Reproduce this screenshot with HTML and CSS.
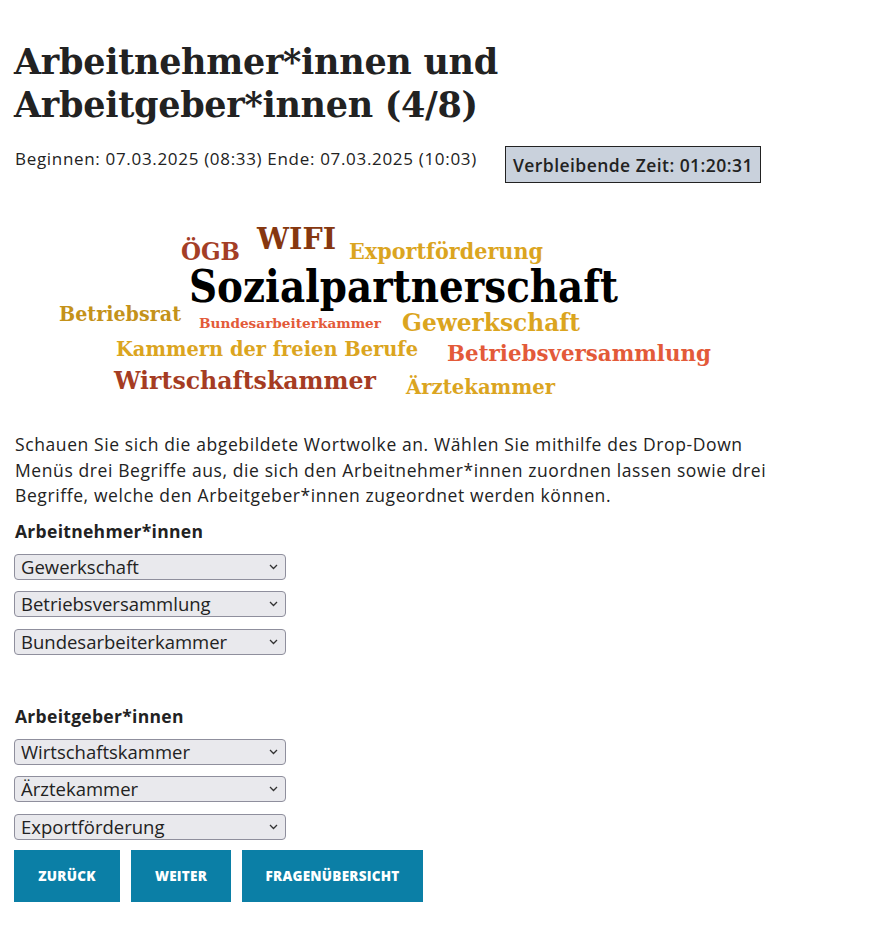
FILE: index.html
```html
<!DOCTYPE html>
<html lang="de">
<head>
<meta charset="utf-8">
<title>Arbeitnehmer*innen und Arbeitgeber*innen</title>
<link rel="stylesheet" href="styles.css">
</head>
<body>
<main class="page">
  <h1 class="title">Arbeitnehmer*innen und<br>Arbeitgeber*innen (4/8)</h1>
  <div class="meta">
    <span class="dates">Beginnen: 07.03.2025 (08:33) Ende: 07.03.2025 (10:03)</span>
    <span class="timer">Verbleibende Zeit: 01:20:31</span>
  </div>
  <svg class="cloud" width="881" height="200" viewBox="0 210 881 200" xmlns="http://www.w3.org/2000/svg">
    <text x="181" y="261" textLength="59" lengthAdjust="spacingAndGlyphs" class="w" fill="#a43e26" font-size="25">ÖGB</text>
    <text x="257" y="250" textLength="79" lengthAdjust="spacingAndGlyphs" class="w" fill="#86370f" font-size="29">WIFI</text>
    <text x="349" y="260" textLength="194" lengthAdjust="spacingAndGlyphs" class="w" fill="#dba51f" font-size="22">Exportförderung</text>
    <text x="189" y="303" textLength="429" lengthAdjust="spacingAndGlyphs" class="w" fill="#000" font-size="44">Sozialpartnerschaft</text>
    <text x="59" y="322" textLength="122" lengthAdjust="spacingAndGlyphs" class="w" fill="#c4921a" font-size="20">Betriebsrat</text>
    <text x="199" y="329" textLength="182" lengthAdjust="spacingAndGlyphs" class="w" fill="#e35a39" font-size="13">Bundesarbeiterkammer</text>
    <text x="402" y="332" textLength="178" lengthAdjust="spacingAndGlyphs" class="w" fill="#dba51f" font-size="25">Gewerkschaft</text>
    <text x="116" y="357" textLength="302" lengthAdjust="spacingAndGlyphs" class="w" fill="#dba51f" font-size="21">Kammern der freien Berufe</text>
    <text x="447" y="362" textLength="264" lengthAdjust="spacingAndGlyphs" class="w" fill="#e35a39" font-size="23">Betriebsversammlung</text>
    <text x="114" y="390" textLength="262" lengthAdjust="spacingAndGlyphs" class="w" fill="#a53c23" font-size="25">Wirtschaftskammer</text>
    <text x="406" y="395" textLength="149" lengthAdjust="spacingAndGlyphs" class="w" fill="#dba51f" font-size="20">Ärztekammer</text>
  </svg>
  <p class="intro">Schauen Sie sich die abgebildete Wortwolke an. Wählen Sie mithilfe des Drop-Down Menüs drei Begriffe aus, die sich den Arbeitnehmer*innen zuordnen lassen sowie drei Begriffe, welche den Arbeitgeber*innen zugeordnet werden können.</p>

  <section class="group">
    <h2 class="group-title">Arbeitnehmer*innen</h2>
    <div class="selects">
      <div class="pick-wrap"><select class="pick"><option>Gewerkschaft</option></select><svg class="chev" width="9" height="6" viewBox="0 0 9 6"><polyline points="1,1 4.5,4.5 8,1" fill="none" stroke="#333" stroke-width="1.3"/></svg></div>
      <div class="pick-wrap"><select class="pick"><option>Betriebsversammlung</option></select><svg class="chev" width="9" height="6" viewBox="0 0 9 6"><polyline points="1,1 4.5,4.5 8,1" fill="none" stroke="#333" stroke-width="1.3"/></svg></div>
      <div class="pick-wrap"><select class="pick"><option>Bundesarbeiterkammer</option></select><svg class="chev" width="9" height="6" viewBox="0 0 9 6"><polyline points="1,1 4.5,4.5 8,1" fill="none" stroke="#333" stroke-width="1.3"/></svg></div>
    </div>
  </section>

  <section class="group group-second">
    <h2 class="group-title">Arbeitgeber*innen</h2>
    <div class="selects">
      <div class="pick-wrap"><select class="pick"><option>Wirtschaftskammer</option></select><svg class="chev" width="9" height="6" viewBox="0 0 9 6"><polyline points="1,1 4.5,4.5 8,1" fill="none" stroke="#333" stroke-width="1.3"/></svg></div>
      <div class="pick-wrap"><select class="pick"><option>Ärztekammer</option></select><svg class="chev" width="9" height="6" viewBox="0 0 9 6"><polyline points="1,1 4.5,4.5 8,1" fill="none" stroke="#333" stroke-width="1.3"/></svg></div>
      <div class="pick-wrap"><select class="pick"><option>Exportförderung</option></select><svg class="chev" width="9" height="6" viewBox="0 0 9 6"><polyline points="1,1 4.5,4.5 8,1" fill="none" stroke="#333" stroke-width="1.3"/></svg></div>
    </div>
  </section>

  <nav class="actions">
    <button class="btn btn-back">Zurück</button>
    <button class="btn btn-next">Weiter</button>
    <button class="btn btn-overview">Fragenübersicht</button>
  </nav>
</main>
</body>
</html>
```

FILE: styles.css
```css
html, body {
  margin: 0;
  padding: 0;
  background: #fff;
}

body {
  font-family: "Open Sans", "Lato", sans-serif;
  color: #222;
}

.page {
  padding: 40px 0 30px 14px;
  width: 800px;
}

.title {
  margin: 0;
  font-family: "DejaVu Serif", serif;
  font-weight: bold;
  font-size: 35px;
  line-height: 43px;
  letter-spacing: -0.3px;
  color: #222;
}

.meta {
  display: flex;
  align-items: flex-start;
  margin-top: 22px;
}

.dates {
  font-size: 17px;
  line-height: 20px;
  padding-top: 1px;
  margin-left: 1px;
  letter-spacing: 0.68px;
}

.timer {
  margin-left: 28px;
  margin-top: -2px;
  background: #c9d1dc;
  border: 1px solid #222;
  font-weight: 600;
  font-size: 17.5px;
  line-height: 21px;
  padding: 8px 7px 6px 7px;
  letter-spacing: 0.45px;
}

.cloud {
  display: block;
  margin: 26px 0 0 -14px;
}

.w {
  font-family: "DejaVu Serif", serif;
  font-weight: bold;
}

.intro {
  margin: 23px 0 0 1px;
  width: 765px;
  font-size: 17.5px;
  line-height: 25.5px;
  letter-spacing: 0.6px;
}

.group {
  margin-top: 11px;
}

.group-second {
  margin-top: 50px;
}

.group-title {
  margin: 0 0 12px 1px;
  font-size: 17.5px;
  line-height: 22px;
  font-weight: 700;
  letter-spacing: 0.3px;
}

.selects {
  display: flex;
  flex-direction: column;
  gap: 11.5px;
}

.pick-wrap {
  position: relative;
  width: 272px;
  height: 26px;
}

.pick {
  appearance: none;
  -webkit-appearance: none;
  display: block;
  width: 272px;
  height: 26px;
  margin: 0;
  font-family: "Open Sans", "Lato", sans-serif;
  font-size: 18.5px;
  color: #222;
  background-color: #e9e9ed;
  border: 1px solid #8f8f9d;
  border-radius: 4px;
  padding: 0 20px 0 6px;
  line-height: 24px;
}

.chev {
  position: absolute;
  right: 8px;
  top: 10px;
  pointer-events: none;
}

.actions {
  display: flex;
  gap: 11px;
  margin-top: 10px;
}

.btn {
  height: 52px;
  border: none;
  background: #0b7fa6;
  color: #fff;
  font-family: "Open Sans", "Lato", sans-serif;
  font-weight: 800;
  font-size: 13.5px;
  letter-spacing: 0.25px;
  text-transform: uppercase;
  cursor: pointer;
  padding: 0;
}

.btn-back { width: 106px; }
.btn-next { width: 100px; }
.btn-overview { width: 181px; }
```
